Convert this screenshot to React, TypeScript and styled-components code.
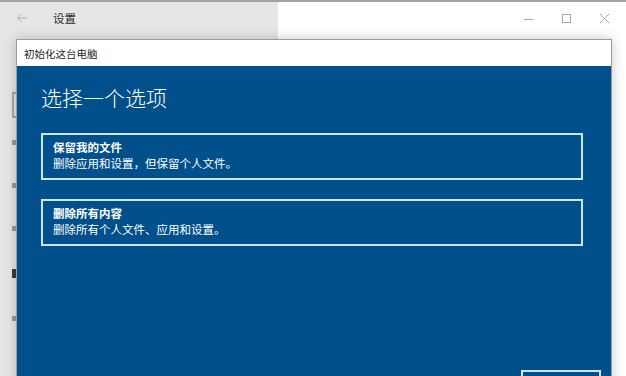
import React from "react";
import styled, { createGlobalStyle } from "styled-components";

const GlobalStyle = createGlobalStyle`
  html, body {
    margin: 0;
    padding: 0;
    width: 626px;
    height: 376px;
    overflow: hidden;
    background: #ffffff;
    font-family: "Noto Sans CJK SC", "Noto Sans", sans-serif;
  }
`;

const Window = styled.div`
  position: relative;
  width: 626px;
  height: 376px;
  display: flex;
  border-top: 2px solid #a2a2a2;
  box-sizing: border-box;
  overflow: hidden;
`;

const Sidebar = styled.div`
  width: 278px;
  background: #e6e6e6;
  display: flex;
  flex-direction: column;
`;

const TitleRow = styled.div`
  height: 32px;
  display: flex;
  align-items: center;
  padding-left: 16px;
  gap: 25px;
  font-size: 11.5px;
  color: #2b2b2b;
`;

const BackArrow = styled.span`
  display: flex;
  width: 12px;
  color: #b0b0b0;
`;

const SearchBox = styled.div`
  margin: 58px 0 0 12px;
  height: 26px;
  width: 240px;
  border: 2px solid #a8a8a8;
  box-sizing: border-box;
`;

const NavList = styled.div`
  display: flex;
  flex-direction: column;
  padding-left: 12px;
  margin-top: 22px;
  gap: 38px;
`;

const NavIcon = styled.div<{ $dark?: boolean }>`
  width: 5px;
  height: ${(p) => (p.$dark ? 9 : 5)}px;
  background: ${(p) => (p.$dark ? "#3a3a3a" : "#9a9a9a")};
`;

const Main = styled.div`
  flex: 1;
  background: #ffffff;
  display: flex;
  justify-content: flex-end;
  align-items: flex-start;
  padding-right: 3px;
`;

const Controls = styled.div`
  height: 32px;
  display: flex;
  align-items: center;
  color: #a6a6a6;
`;

const ControlButton = styled.div`
  width: 38px;
  height: 32px;
  display: flex;
  align-items: center;
  justify-content: center;
`;

const Dialog = styled.div`
  position: absolute;
  left: 16px;
  top: 37px;
  width: 594px;
  border: 1px solid #9c9c9c;
  box-shadow: 0 0 12px rgba(0, 0, 0, 0.22);
  display: flex;
  flex-direction: column;
`;

const DialogTitle = styled.div`
  height: 26px;
  background: #ffffff;
  display: flex;
  align-items: center;
  padding-left: 7px;
  font-size: 10.5px;
  color: #1c1c1c;
`;

const DialogBody = styled.div`
  height: 346px;
  background: #01508b;
  display: flex;
  flex-direction: column;
  padding: 16px 0 10px 24px;
  box-sizing: border-box;
  color: #ffffff;
`;

const Heading = styled.h1`
  margin: 0 0 21px 0;
  font-size: 21px;
  font-weight: 300;
  line-height: 30px;
`;

const Options = styled.div`
  display: flex;
  flex-direction: column;
  gap: 19px;
  width: 542px;
`;

const Option = styled.div`
  height: 47px;
  border: 2px solid #cfe6f8;
  box-sizing: border-box;
  padding: 4px 10px 0;
  display: flex;
  flex-direction: column;
`;

const OptionTitle = styled.div`
  font-size: 11.5px;
  font-weight: 700;
  line-height: 16px;
`;

const OptionText = styled.div`
  font-size: 11.5px;
  line-height: 17px;
`;

const Footer = styled.div`
  margin-top: auto;
  display: flex;
  justify-content: flex-end;
  padding-right: 10px;
`;

const Button = styled.div`
  width: 80px;
  height: 32px;
  border: 2px solid #cfe6f8;
  box-sizing: border-box;
`;

const options = [
  { title: "保留我的文件", text: "删除应用和设置，但保留个人文件。" },
  { title: "删除所有内容", text: "删除所有个人文件、应用和设置。" },
];

const App = () => {
  return (
    <>
      <GlobalStyle />
      <Window>
        <Sidebar>
          <TitleRow>
            <BackArrow>
              <svg width="12" height="12" viewBox="0 0 12 12" fill="none" stroke="currentColor" strokeWidth="1">
                <path d="M11 6H1.5M5.5 2L1.5 6l4 4" />
              </svg>
            </BackArrow>
            <span>设置</span>
          </TitleRow>
          <SearchBox />
          <NavList>
            <NavIcon />
            <NavIcon />
            <NavIcon />
            <NavIcon $dark />
            <NavIcon />
          </NavList>
        </Sidebar>
        <Main>
          <Controls>
            <ControlButton>
              <svg width="9" height="9" viewBox="0 0 9 9" stroke="currentColor" strokeWidth="1">
                <path d="M0 5.5h9" />
              </svg>
            </ControlButton>
            <ControlButton>
              <svg width="9" height="9" viewBox="0 0 9 9" fill="none" stroke="currentColor" strokeWidth="1">
                <rect x="0.5" y="0.5" width="8" height="8" />
              </svg>
            </ControlButton>
            <ControlButton>
              <svg width="9" height="9" viewBox="0 0 9 9" stroke="currentColor" strokeWidth="1">
                <path d="M0 0l9 9M9 0L0 9" />
              </svg>
            </ControlButton>
          </Controls>
        </Main>
        <Dialog>
          <DialogTitle>初始化这台电脑</DialogTitle>
          <DialogBody>
            <Heading>选择一个选项</Heading>
            <Options>
              {options.map((o) => (
                <Option key={o.title}>
                  <OptionTitle>{o.title}</OptionTitle>
                  <OptionText>{o.text}</OptionText>
                </Option>
              ))}
            </Options>
            <Footer>
              <Button />
            </Footer>
          </DialogBody>
        </Dialog>
      </Window>
    </>
  );
};

export default App;
